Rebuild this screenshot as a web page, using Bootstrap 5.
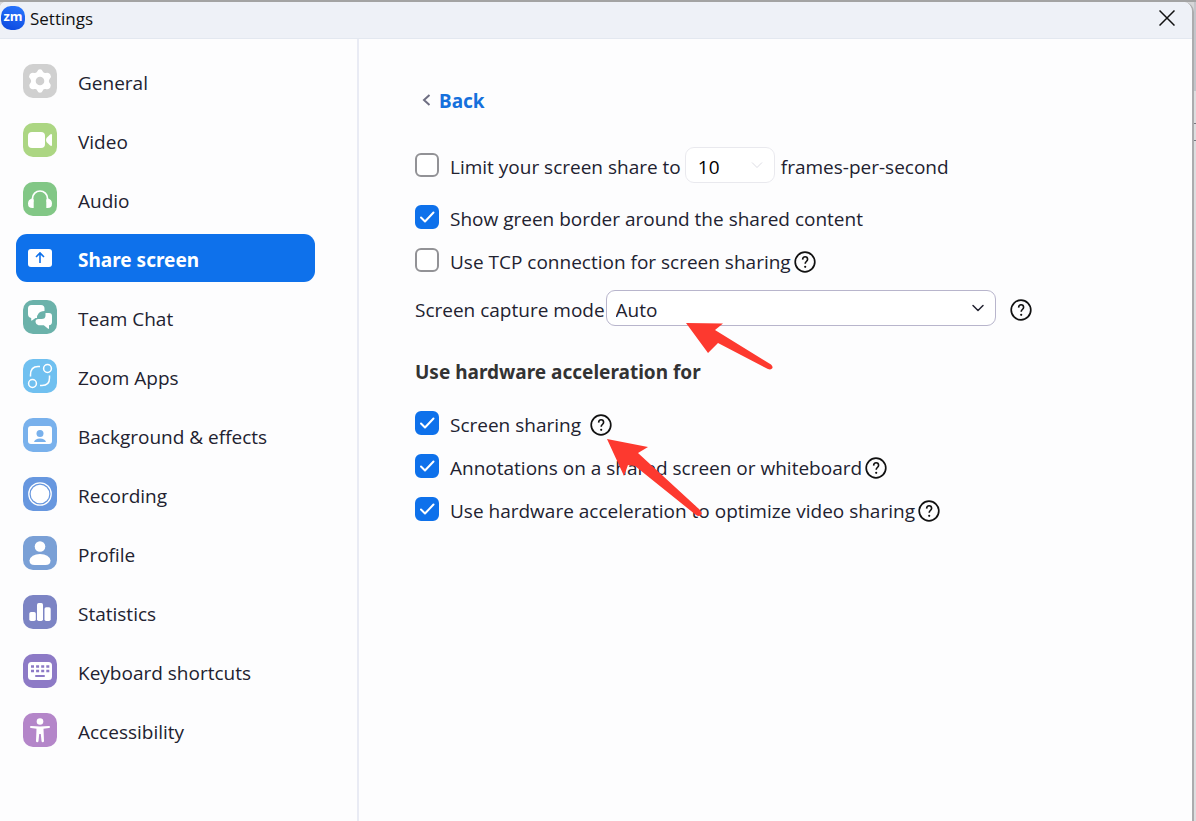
<!DOCTYPE html>
<html lang="en">
<head>
<meta charset="utf-8">
<meta name="viewport" content="width=device-width, initial-scale=1">
<title>Settings</title>
<link href="https://cdn.jsdelivr.net/npm/bootstrap@5.3.0/dist/css/bootstrap.min.css" rel="stylesheet">
<style>
  body { font-family: "Open Sans", "Noto Sans", sans-serif; font-size: 19px; line-height: 24px; color: #222230; background: #a3a3a3; padding-top: 2px; }
  .desktop { min-height: calc(100vh - 2px); background: #d6d6d8; }
  .window { background: #fdfdfe; border-right: 2px solid #acacae; border-top-right-radius: 10px; border-top-left-radius: 6px; overflow: hidden; }
  .edge { width: 2px; background: linear-gradient(#c3c5ca 89px, #dedee0 89px); padding-top: 121px; }
  .edge-mark { height: 18px; border: solid #77777f; border-width: 1px 0; }
  .title-bar { height: 37px; background: #eef1f7; border-bottom: 1px solid #e3e8f0; color: #111; font-size: 17px; }
  .title-text { margin-left: 5px; padding-bottom: 2px; }
  .app-logo { width: 24px; height: 24px; margin: 0 0 4px 1px; border-radius: 10px; background: linear-gradient(200deg, #2a78ff, #0a46dd); color: #fff; font-size: 13px; line-height: 21px; font-weight: 700; }
  .close-btn { width: 50px; height: 31px; line-height: 1; align-self: start; }
  .sidebar { width: 359px; border-right: 2px solid #e9ebf4; padding: 18px 42px 18px 16px; }
  .side-nav { gap: 11px; }
  .side-nav .nav-link { height: 48px; padding: 0 7px; gap: 21px; color: #222230; border-radius: 11px; }
  .side-nav .nav-link span { padding-top: 3px; }
  .side-nav .nav-link.active { background: #0e71eb; color: #fff; font-family: "Noto Sans", sans-serif; font-weight: 700; }
  .side-nav svg { width: 34px; height: 34px; }
  .content { padding: 50px 56px; }
  .back { width: fit-content; color: #1570dc; font-family: "Noto Sans", sans-serif; font-weight: 700; gap: 8px; padding-left: 7px; }
  .back svg { margin-top: -2px; }
  .setting { height: 43px; }
  .limit-row { margin: 30px 0 9px; }
  .capture-row { margin-top: 5px; }
  .capture-row label { margin-right: 1px; }
  .setting label { padding-top: 5px; }
  .setting .form-check-input { width: 24px; height: 24px; margin: 0 11px 0 0; border: 2px solid #929296; border-radius: 6px; background-color: #fff; }
  .setting .form-check-input:checked { background-color: #0e71eb; border-color: #0e71eb; background-size: 24px 24px; background-image: url("data:image/svg+xml,%3Csvg xmlns='http://www.w3.org/2000/svg' viewBox='0 0 24 24'%3E%3Cpath fill='none' stroke='white' stroke-width='2' stroke-linecap='round' stroke-linejoin='round' d='M6 12.500l4 4L18.500 7.500'/%3E%3C/svg%3E"); }
  .help { width: 22px; height: 22px; margin-left: 3px; margin-top: 4px; color: #111; }
  .capture-row .help { margin-left: 14px; }
  .help-anchor { padding-left: 6px; }
  .form-select { height: 36px; padding: 4px 30px 0 9px; font-size: 19px; line-height: 24px; color: #222230; border: 1px solid #b8b5cc; border-radius: 9px; background-color: #fff; background-size: 14px 14px; background-position: right 10px center; background-image: url("data:image/svg+xml,%3Csvg xmlns='http://www.w3.org/2000/svg' viewBox='0 0 14 14'%3E%3Cpath fill='none' stroke='%23222230' stroke-width='1.500' stroke-linecap='round' stroke-linejoin='round' d='M2 4.500l5 5 5-5'/%3E%3C/svg%3E"); }
  .form-select.fps { width: 90px; color: #000; opacity: 1; background-color: #fff; padding-left: 12px; margin: 0 6px 0 4px; border-color: #e9e9ee; background-image: url("data:image/svg+xml,%3Csvg xmlns='http://www.w3.org/2000/svg' viewBox='0 0 14 14'%3E%3Cpath fill='none' stroke='%23dddde4' d='M2 4.500l5 5 5-5'/%3E%3C/svg%3E"); }
  .capture { width: 390px; }
  .pointer { position: absolute; fill: #fd392f; pointer-events: none; z-index: 2; }
  .pointer-capture { left: 80px; top: 32px; }
  .pointer-sharing { left: 26px; top: 28px; }
  h2 { font-family: "Noto Sans", sans-serif; font-size: 19px; line-height: 24px; font-weight: 700; color: #333; }
  .section-title { margin: 31px 0 17px; }
</style>
</head>
<body>
<svg class="d-none">
  <symbol id="help" viewBox="0 0 22 22"><circle cx="11" cy="11" r="9.800" fill="none" stroke="currentColor" stroke-width="1.700"/><path d="M8.600 8.600C8.700 6.700 9.600 5.700 11.100 5.700c1.600 0 2.500 1.100 2.500 2.600 0 2.200-2.400 2.200-2.400 4.400" fill="none" stroke="currentColor" stroke-width="1.600"/><circle cx="11.200" cy="15.800" r="1.100" fill="currentColor"/></symbol>
</svg>
<div class="desktop d-flex">
  <div class="window d-flex flex-column flex-grow-1">
    <header class="title-bar d-flex align-items-center">
      <span class="app-logo text-center flex-shrink-0">zm</span>
      <span class="title-text">Settings</span>
      <button type="button" class="close-btn btn p-0 border-0 ms-auto" aria-label="Close"><svg width="16" height="16" viewBox="0 0 16 16" stroke="#111" stroke-width="1.500"><path d="M.5.5l15 15M15.500.5l-15 15"/></svg></button>
    </header>
    <div class="d-flex flex-grow-1">
      <aside class="sidebar flex-shrink-0">
        <nav class="side-nav nav flex-column" aria-label="Settings sections">
          <a class="nav-link d-flex align-items-center" href="#"><svg viewBox="0 0 34 34"><rect width="34" height="34" rx="10" fill="#d0d0d0"/><path d="M14.200 7.500Q15 5.300 17 5.300t2.800 2.200q.7 1.800 2.900 1.400 3.200-.8 4.600 1.500 1.500 2.300-.5 4.300-1.900 2.300 0 4.600 2 2 .5 4.300-1.400 2.300-4.600 1.500-2.200-.4-2.900 1.400Q19 28.700 17 28.700t-2.800-2.200q-.7-1.800-2.900-1.400-3.200.8-4.600-1.500-1.500-2.300.5-4.300 1.900-2.300 0-4.600-2-2-.5-4.300 1.400-2.300 4.600-1.500 2.200.4 2.900-1.400z" fill="#fff"/><circle cx="17" cy="17" r="4.300" fill="#d0d0d0"/></svg><span>General</span></a>
          <a class="nav-link d-flex align-items-center" href="#"><svg viewBox="0 0 34 34"><rect width="34" height="34" rx="10" fill="#acd683"/><rect x="5" y="9" width="17" height="16" rx="4" fill="#fff"/><path d="M23.500 15l3.600-3.600q1.900-1.200 1.900.8v9.600q0 2-1.900.8L23.500 19q-1-2 0-4z" fill="#fff"/></svg><span>Video</span></a>
          <a class="nav-link d-flex align-items-center" href="#"><svg viewBox="0 0 34 34"><rect width="34" height="34" rx="10" fill="#82c786"/><path d="M9.500 20v-3.500a7.500 7.500 0 0 1 15 0V20" fill="none" stroke="#fff" stroke-width="1.700"/><path d="M9 16.500l1.700 1v8.500q-5.700.7-5.700-4.500 0-4 4-5zM25 16.500l-1.700 1v8.500q5.700.7 5.700-4.500 0-4-4-5z" fill="#fff"/></svg><span>Audio</span></a>
          <a class="nav-link active d-flex align-items-center" href="#" aria-current="page"><svg viewBox="0 0 34 34"><rect x="5" y="8" width="24" height="18" rx="3" fill="#fff"/><path d="M17 22v-9M13 16l4-4 4 4" fill="none" stroke="#0e71eb" stroke-width="1.600"/></svg><span>Share screen</span></a>
          <a class="nav-link d-flex align-items-center" href="#"><svg viewBox="0 0 34 34"><rect width="34" height="34" rx="10" fill="#6bb2aa"/><path d="M8.500 5H18q3.500 0 3.500 3.500V11q-4.500.2-6 2.500-1.700 2-1.500 4.500h-1.500L9 20.500q-.8.500-.8-.8V18Q5 17.500 5 14V8.500Q5 5 8.500 5z" fill="#fff"/><path d="M22.500 13H26q3 0 3 3v6q0 3-3 3.300V28q0 1.500-1.200.6l-4-3.300h-5.300Q13 25 12.500 22q-.2-3 3-3h3q4 0 4-3.500z" fill="#fff"/></svg><span>Team Chat</span></a>
          <a class="nav-link d-flex align-items-center" href="#"><svg viewBox="0 0 34 34" fill="none" stroke="#fff" stroke-width="1.500"><rect width="34" height="34" rx="10" fill="#70c0f0" stroke="none"/><circle cx="24.500" cy="9.500" r="3.900"/><circle cx="9.500" cy="24.500" r="3.900"/><path d="M17 7.500h-2q-7.500 0-7.500 8.500v1.500M17 26.500h2q7.500 0 7.500-7.500v-2.500"/></svg><span>Zoom Apps</span></a>
          <a class="nav-link d-flex align-items-center" href="#"><svg viewBox="0 0 34 34"><rect width="34" height="34" rx="10" fill="#79b1ec"/><rect x="5" y="8" width="24" height="18" rx="3" fill="#fff"/><circle cx="17" cy="15.500" r="3.500" fill="#79b1ec"/><path d="M11 24q1-3.500 6-3.500t6 3.500z" fill="#79b1ec"/></svg><span>Background &amp; effects</span></a>
          <a class="nav-link d-flex align-items-center" href="#"><svg viewBox="0 0 34 34"><rect width="34" height="34" rx="10" fill="#6797df"/><circle cx="17" cy="17" r="11.200" fill="none" stroke="#fff" stroke-width="1.300"/><circle cx="17" cy="17" r="9.300" fill="#fff"/></svg><span>Recording</span></a>
          <a class="nav-link d-flex align-items-center" href="#"><svg viewBox="0 0 34 34"><rect width="34" height="34" rx="10" fill="#7aa0d6"/><circle cx="17" cy="10.500" r="5.300" fill="#fff"/><path d="M6.500 24.500Q8 18 17 18t10.500 6.500q0 4.500-5 4.500h-11q-5 0-5-4.500z" fill="#fff"/></svg><span>Profile</span></a>
          <a class="nav-link d-flex align-items-center" href="#"><svg viewBox="0 0 34 34"><rect width="34" height="34" rx="10" fill="#7c84c4"/><g fill="#fff"><rect x="6.300" y="17" width="6.500" height="9" rx="1.700"/><rect x="14" y="8" width="6" height="18" rx="1.700"/><rect x="21.500" y="12.300" width="6.200" height="13.700" rx="1.700"/></g></svg><span>Statistics</span></a>
          <a class="nav-link d-flex align-items-center" href="#"><svg viewBox="0 0 34 34"><rect width="34" height="34" rx="10" fill="#8d7ac6"/><rect x="5" y="8" width="24" height="18" rx="3.500" fill="#fff"/><path d="M8 12.500h3m2.100 0h3m2.100 0h3m2.100 0h3M8 17h3m2.100 0h3m2.100 0h3m2.100 0h3" stroke="#8d7ac6" stroke-width="2.600"/><path d="M13 22h8" stroke="#8d7ac6" stroke-width="2" stroke-linecap="round"/></svg><span>Keyboard shortcuts</span></a>
          <a class="nav-link d-flex align-items-center" href="#"><svg viewBox="0 0 34 34"><rect width="34" height="34" rx="10" fill="#b486c9"/><circle cx="17" cy="8.500" r="3.300" fill="#fff"/><path d="M8 13q9 .8 18 0 1 0 1 .9t-1 1l-5.500.8L21 28q0 1.200-1.200 1.200T18.500 28L17.800 21h-1.600L15.500 28q-.1 1.200-1.300 1.200T13 28l.5-12.300L8 14.900q-1-.1-1-1T8 13z" fill="#fff"/></svg><span>Accessibility</span></a>
        </nav>
      </aside>
      <main class="content flex-grow-1">
        <a class="back d-flex align-items-center text-decoration-none" href="#"><svg width="9" height="14" viewBox="0 0 9 14" fill="none" stroke="#6e6e82" stroke-width="2"><path d="M7.500 2L2 7l5.500 5"/></svg>Back</a>
        <div class="setting limit-row d-flex align-items-center">
          <input class="form-check-input" type="checkbox" id="limit"><label for="limit">Limit your screen share to</label>
          <select class="form-select fps" aria-label="Frames per second" disabled><option>10</option></select><label for="limit">frames-per-second</label>
        </div>
        <div class="setting d-flex align-items-center"><input class="form-check-input" type="checkbox" id="border" checked><label for="border">Show green border around the shared content</label></div>
        <div class="setting d-flex align-items-center"><input class="form-check-input" type="checkbox" id="tcp"><label for="tcp">Use TCP connection for screen sharing</label><svg class="help"><use href="#help"/></svg></div>
        <div class="setting capture-row d-flex align-items-center">
          <label for="capture">Screen capture mode</label>
          <div class="position-relative">
            <select class="form-select capture" id="capture"><option>Auto</option></select>
            <svg class="pointer pointer-capture" width="88" height="48" viewBox="0 0 88 48"><path d="M0 1L37 1.500 29 8 85 42.500Q87.500 45 86 46.500T82 47L32 21 22 31z"/></svg>
          </div>
          <svg class="help"><use href="#help"/></svg>
        </div>
        <h2 class="section-title">Use hardware acceleration for</h2>
        <div class="setting d-flex align-items-center"><input class="form-check-input" type="checkbox" id="sharing" checked><label for="sharing">Screen sharing</label>
          <span class="help-anchor position-relative d-flex"><svg class="help"><use href="#help"/></svg>
            <svg class="pointer pointer-sharing" width="98" height="80" viewBox="0 0 98 80"><path d="M0 1L41 9 31 15 93 72Q96 75 94 77T89 77L28 28 21 27 17 38z"/></svg></span>
        </div>
        <div class="setting d-flex align-items-center"><input class="form-check-input" type="checkbox" id="annotations" checked><label for="annotations">Annotations on a shared screen or whiteboard</label><svg class="help"><use href="#help"/></svg></div>
        <div class="setting d-flex align-items-center"><input class="form-check-input" type="checkbox" id="video" checked><label for="video">Use hardware acceleration to optimize video sharing</label><svg class="help"><use href="#help"/></svg></div>
      </main>
    </div>
  </div>
  <div class="edge flex-shrink-0"><div class="edge-mark"></div></div>
</div>
<script src="https://cdn.jsdelivr.net/npm/bootstrap@5.3.0/dist/js/bootstrap.bundle.min.js"></script>
</body>
</html>
